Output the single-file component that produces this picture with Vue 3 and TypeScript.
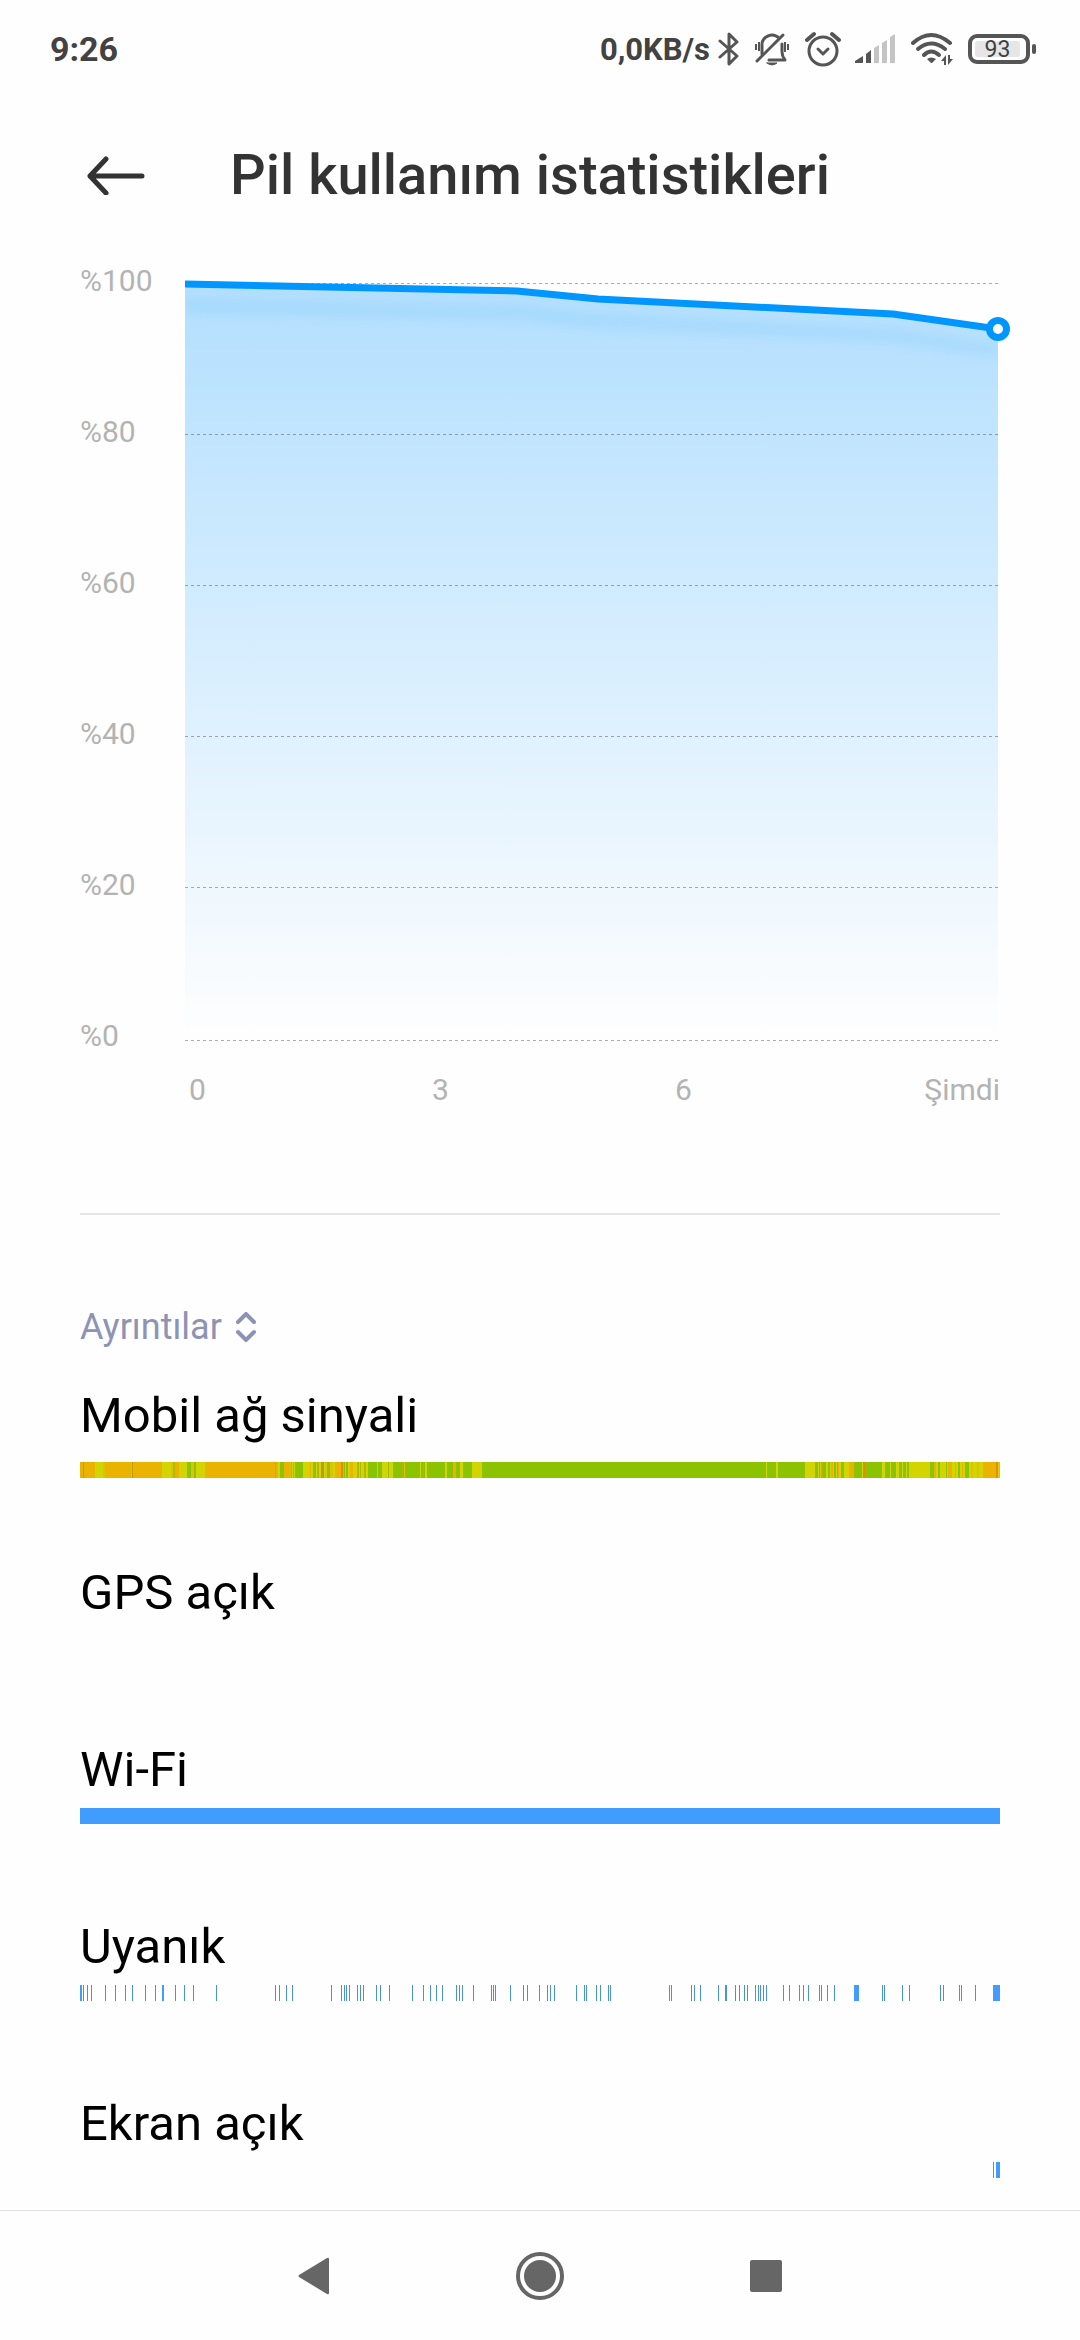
<script setup lang="ts">
interface Span {
  x: number
  w: number
  color: string
}

const THIN = '#4a92d6'
const SOLID = '#409cff'

const signalColors: Record<string, string> = {
  O: '#eab300',
  Y: '#d2d500',
  G: '#8cc300',
  R: '#e88a00',
  M: '#dec400',
  L: '#b0b900',
  K: '#bd9c00',
}

// Signal strength over time: colour key followed by its length.
const signalRuns =
  'O3 R1 O11 Y8 M2 O26 M1 K1 O29 Y9 M2 L2 O4 Y8 G4 M3 G2 Y9 O70 L1 O2 Y2 G4 O6 M1 L1 Y1 L1 Y1 G8 ' +
  'Y7 O1 Y2 G3 Y1 L2 Y2 K3 Y1 M2 G3 M3 Y2 O6 R2 O1 G1 Y1 G2 Y2 O3 Y4 L2 Y1 L1 Y3 L2 Y2 G9 Y1 G4 ' +
  'Y6 G1 Y4 G9 L1 G1 M1 G15 Y1 G2 L1 G1 Y2 G18 Y2 G6 O3 G4 Y3 G9 Y10 G284 Y1 G9 Y2 G27 Y10 G3 Y1 ' +
  'K1 Y1 L2 G3 Y2 G2 Y1 O2 Y1 G2 Y1 G1 O1 Y2 G3 Y5 O5 G8 Y1 K1 R1 G17 Y3 G5 Y1 G5 Y3 G3 Y1 G3 Y1 ' +
  'G2 Y21 G4 O2 Y2 G2 Y6 G1 Y1 O4 Y3 O1 Y2 G2 Y2 O1 Y2 G4 Y2 M2 Y4 M2 Y4 O13 R2 Y1 M1'

function parseRuns(runs: string): Span[] {
  let x = 0
  return runs.split(' ').map((run) => {
    const w = Number(run.slice(1))
    const span = { x, w, color: signalColors[run[0]] }
    x += w
    return span
  })
}

const awakeTicks = [
  3, 7, 11, 25, 35, 45, 52, 65, 75, 95, 104, 113, 136, 195, 199, 206, 212, 251, 261, 264, 266, 269,
  277, 280, 283, 296, 300, 309, 332, 343, 350, 356, 362, 376, 379, 382, 393, 411, 413, 415, 430,
  443, 447, 459, 467, 470, 474, 496, 504, 506, 516, 520, 528, 530, 589, 591, 611, 614, 620, 638,
  655, 659, 664, 667, 675, 678, 680, 683, 686, 703, 709, 719, 723, 728, 739, 741, 747, 754, 802,
  804, 822, 829, 860, 863, 879, 881, 895,
]

const awake: Span[] = [
  ...awakeTicks.map((x) => ({ x, w: 1, color: THIN })),
  { x: 0, w: 2, color: SOLID },
  { x: 82, w: 2, color: SOLID },
  { x: 645, w: 2, color: THIN },
  { x: 774, w: 5, color: SOLID },
  { x: 913, w: 7, color: SOLID },
]

const rows: { name: string; spans: Span[]; signal?: boolean }[] = [
  { name: 'Mobil ağ sinyali', spans: parseRuns(signalRuns), signal: true },
  { name: 'GPS açık', spans: [] },
  { name: 'Wi-Fi', spans: [{ x: 0, w: 920, color: SOLID }] },
  { name: 'Uyanık', spans: awake },
  {
    name: 'Ekran açık',
    spans: [
      { x: 913, w: 1, color: THIN },
      { x: 916, w: 4, color: SOLID },
    ],
  },
]

const levels = ['%100', '%80', '%60', '%40', '%20', '%0']
const hours = ['0', '3', '6', 'Şimdi']
const gridLines = [0, 151, 302, 453, 604, 757]
const curve = '0,1 332,8 413,16 708,31 813,46'
</script>

<template>
  <div class="page">
    <div class="status">
      <span class="clock">9:26</span>
      <div class="indicators">
        <span class="speed">0,0KB/s</span>
        <svg class="bt" width="22" height="36" viewBox="0 0 22 36" fill="none" stroke="#555" stroke-width="3" stroke-linejoin="round" stroke-linecap="round">
          <path d="M2 10 19 25 11 33V3l8 8L2 26" />
        </svg>
        <svg class="bell" width="36" height="36" viewBox="0 0 36 36" fill="none" stroke="#555" stroke-width="3" stroke-linecap="round">
          <path d="M8 23V15a10 10 0 0 1 17-8" />
          <path d="M28 13v8q0 4 3 8H15" stroke-linejoin="round" />
          <path d="M3 30 29 4" />
          <path d="M13 32h10q-5 4-10 0z" fill="#555" stroke-width="1" />
          <path d="M2 13v6M5 11v9M31 11v10M34 13v6" stroke-width="2" stroke-linecap="butt" />
        </svg>
        <svg class="alarm" width="36" height="36" viewBox="0 0 36 36" fill="none" stroke="#555" stroke-width="3" stroke-linecap="round">
          <circle cx="18" cy="20" r="14" />
          <path d="m13 18 5 5 5-5" stroke-linejoin="round" />
          <path d="m2 9 7-6M27 3l7 6" stroke-width="4" />
        </svg>
        <svg class="bars" width="40" height="30" viewBox="0 0 40 30">
          <path d="M0 29v-2l8-5v7zM11 29v-9l5-4v13z" fill="#555" />
          <path d="M19 29V14l5-3v18zM27 29V9l5-3v23zM35 29V3l5-3v29z" fill="#c4c4c4" />
        </svg>
        <svg class="wifi" width="44" height="36" viewBox="0 0 44 36" fill="none" stroke="#555" stroke-width="4" stroke-linecap="round">
          <path d="M3 12q18-16 37 0" />
          <path d="M8 18q13-11 27 0" />
          <path d="M14 24q7-7 15 0" />
          <path d="M17 28q4-3 9 0l-4 4h-1z" fill="#555" stroke="none" />
          <path d="M36 24v10h-2v-4h-3zM38 34V24h2v4h3z" fill="#555" stroke="none" />
        </svg>
        <span class="battery"><span class="charge">93</span></span>
      </div>
    </div>

    <header class="header">
      <button class="back" type="button" aria-label="Geri">
        <svg width="58" height="40" viewBox="0 0 58 40" fill="none" stroke="#333" stroke-width="5" stroke-linecap="round" stroke-linejoin="round">
          <path d="M55 21H3M19 4 3 21l16 17" />
        </svg>
      </button>
      <h1>Pil kullanım istatistikleri</h1>
    </header>

    <main class="content">
      <section class="chart">
        <div class="graph">
          <div class="levels">
            <span v-for="level in levels" :key="level">{{ level }}</span>
          </div>
          <div class="plot">
            <svg class="area" viewBox="0 0 813 758" preserveAspectRatio="none">
              <defs>
                <linearGradient id="fade" x1="0" y1="0" x2="0" y2="757" gradientUnits="userSpaceOnUse">
                  <stop offset="0" stop-color="#0096ff" stop-opacity="0.3" />
                  <stop offset="1" stop-color="#0096ff" stop-opacity="0" />
                </linearGradient>
                <filter id="soft" x="-10%" y="-100%" width="120%" height="300%">
                  <feGaussianBlur stdDeviation="4" />
                </filter>
                <clipPath id="inside">
                  <polygon :points="`${curve} 813,758 0,758`" />
                </clipPath>
                <clipPath id="plot-width">
                  <rect x="0" y="-10" width="813" height="768" />
                </clipPath>
              </defs>
              <polygon :points="`${curve} 813,758 0,758`" fill="url(#fade)" />
              <g clip-path="url(#inside)">
                <polyline :points="curve" transform="translate(0 22)" fill="none" stroke="#0090e8" stroke-width="16" stroke-opacity="0.07" filter="url(#soft)" />
              </g>
              <g stroke="#000" stroke-opacity="0.32" stroke-dasharray="3 3" shape-rendering="crispEdges">
                <path v-for="y in gridLines" :key="y" :d="`M0 ${y + 0.5}H813`" />
              </g>
              <g clip-path="url(#plot-width)">
                <polyline :points="curve" fill="none" stroke="#0096ff" stroke-width="7" stroke-linejoin="round" />
              </g>
            </svg>
            <span class="marker"></span>
          </div>
        </div>
        <div class="hours">
          <span v-for="hour in hours" :key="hour">{{ hour }}</span>
        </div>
      </section>

      <button class="details" type="button">
        Ayrıntılar
        <svg width="22" height="30" viewBox="0 0 22 30" fill="none" stroke="#8d94b3" stroke-width="4" stroke-linecap="round">
          <path d="m3 10 8-8 8 8M3 20l8 8 8-8" />
        </svg>
      </button>

      <ul class="rows">
        <li v-for="row in rows" :key="row.name" :class="{ signal: row.signal }">
          <h2>{{ row.name }}</h2>
          <svg class="track" viewBox="0 0 920 16" preserveAspectRatio="none" shape-rendering="crispEdges">
            <rect v-for="(s, i) in row.spans" :key="i" :x="s.x" y="0" :width="s.w" height="16" :fill="s.color" />
          </svg>
        </li>
      </ul>
    </main>

    <nav class="nav">
      <button type="button" aria-label="Geri">
        <svg width="32" height="40" viewBox="0 0 32 40" fill="#666"><path d="M29 2q2-1 2 1v34q0 2-2 1L1 21q-1-1 0-2z" /></svg>
      </button>
      <button type="button" aria-label="Ana ekran">
        <svg width="50" height="50" viewBox="0 0 50 50" fill="#666">
          <circle cx="25" cy="25" r="22" fill="none" stroke="#666" stroke-width="4" />
          <circle cx="25" cy="25" r="16" />
        </svg>
      </button>
      <button type="button" aria-label="Son uygulamalar">
        <svg width="32" height="32" viewBox="0 0 32 32" fill="#666"><rect width="32" height="32" rx="2" /></svg>
      </button>
    </nav>
  </div>
</template>

<style>
body {
  background: #fefefe;
}
</style>

<style scoped>
.page {
  display: flex;
  flex-direction: column;
  min-height: 100vh;
  font-family: Roboto, 'Noto Sans', sans-serif;
  color: #000;
}

svg {
  display: block;
}

button {
  padding: 0;
  border: 0;
  background: none;
  font: inherit;
  cursor: pointer;
}

h1,
h2 {
  margin: 0;
}

.status {
  display: flex;
  align-items: center;
  justify-content: space-between;
  height: 98px;
  padding: 0 44px 0 50px;
  color: #424242;
}

.clock {
  font-size: 34px;
  font-weight: 700;
}

.indicators {
  display: flex;
  align-items: center;
}

.speed {
  font-size: 31px;
  font-weight: 700;
}

.bt {
  margin-left: 8px;
}

.bell {
  margin-left: 14px;
}

.alarm {
  margin-left: 15px;
}

.bars {
  margin-left: 14px;
}

.wifi {
  margin-left: 15px;
}

.battery {
  position: relative;
  box-sizing: border-box;
  width: 62px;
  height: 30px;
  margin: 0 6px 0 14px;
  padding: 3px;
  border: 4px solid #555;
  border-radius: 9px;
}

.battery::after {
  content: '';
  position: absolute;
  top: 6px;
  right: -10px;
  width: 4px;
  height: 10px;
  border-radius: 2px;
  background: #555;
}

.charge {
  display: block;
  width: 45px;
  height: 16px;
  border-radius: 3px;
  background: #e6e6e6;
  font-size: 23px;
  line-height: 17px;
  text-align: center;
}

.header {
  display: flex;
  align-items: center;
  height: 154px;
  padding: 0 80px 0 87px;
}

.back {
  margin-right: 85px;
}

h1 {
  font-size: 56px;
  line-height: 64px;
  font-weight: 500;
  color: #333;
}

.content {
  flex: 1;
  padding: 0 80px 32px;
}

.chart {
  padding: 11px 0 105px;
  border-bottom: 2px solid #e5e5e5;
  font-size: 30px;
  line-height: 36px;
  color: #b3b3b3;
}

.graph {
  display: flex;
}

.levels {
  display: flex;
  flex-direction: column;
  justify-content: space-between;
  width: 105px;
}

.plot {
  position: relative;
  flex: 1;
  margin: 20px 2px 13px 0;
}

.area {
  width: 100%;
  height: 758px;
  overflow: visible;
}

.marker {
  position: absolute;
  top: 34px;
  right: -12px;
  box-sizing: border-box;
  width: 24px;
  height: 24px;
  border: 7px solid #0096ff;
  border-radius: 50%;
  background: #fff;
}

.hours {
  display: grid;
  grid-template-columns: 243fr 243fr 162fr 163fr;
  margin-top: 18px;
  padding-left: 109px;
}

.hours span:last-child {
  text-align: right;
}

.details {
  display: flex;
  align-items: center;
  gap: 13px;
  margin-top: 90px;
  font-size: 36px;
  line-height: 44px;
  color: #8d94b3;
}

.rows {
  margin: 37px 0 0;
  padding: 0;
  list-style: none;
}

.rows li:not(:last-child) {
  min-height: 177px;
}

h2 {
  font-size: 49px;
  line-height: 60px;
  font-weight: 400;
}

.track {
  width: 100%;
  height: 16px;
  margin-top: 8px;
}

.signal .track {
  margin-top: 16px;
}

.nav {
  display: flex;
  align-items: center;
  justify-content: center;
  height: 129px;
  border-top: 1px solid #e3e3e3;
}

.nav button {
  display: flex;
  justify-content: center;
  width: 226px;
}
</style>
